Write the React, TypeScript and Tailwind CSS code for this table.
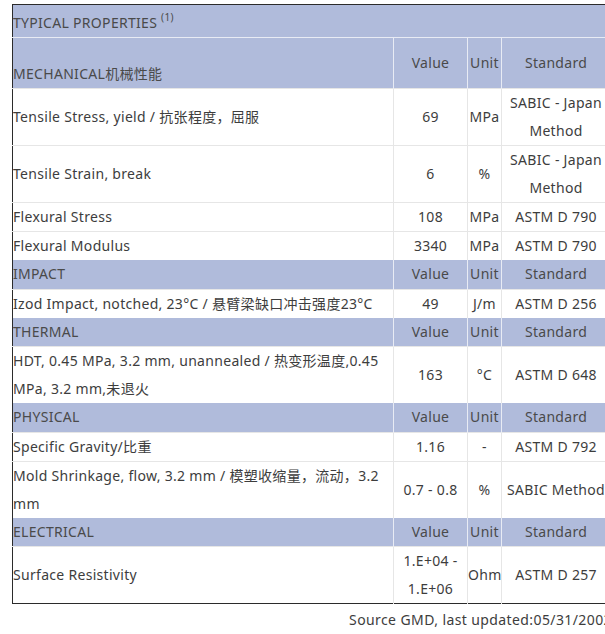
type Row = { label: string; value: string; unit: string; standard: string };
type Section = { title: string; rows: Row[] };

const sections: Section[] = [
  {
    title: 'MECHANICAL机械性能',
    rows: [
      { label: 'Tensile Stress, yield / 抗张程度，屈服', value: '69', unit: 'MPa', standard: 'SABIC - Japan Method' },
      { label: 'Tensile Strain, break', value: '6', unit: '%', standard: 'SABIC - Japan Method' },
      { label: 'Flexural Stress', value: '108', unit: 'MPa', standard: 'ASTM D 790' },
      { label: 'Flexural Modulus', value: '3340', unit: 'MPa', standard: 'ASTM D 790' },
    ],
  },
  {
    title: 'IMPACT',
    rows: [{ label: 'Izod Impact, notched, 23°C / 悬臂梁缺口冲击强度23°C', value: '49', unit: 'J/m', standard: 'ASTM D 256' }],
  },
  {
    title: 'THERMAL',
    rows: [
      {
        label: 'HDT, 0.45 MPa, 3.2 mm, unannealed / 热变形温度,0.45 MPa, 3.2 mm,未退火',
        value: '163',
        unit: '°C',
        standard: 'ASTM D 648',
      },
    ],
  },
  {
    title: 'PHYSICAL',
    rows: [
      { label: 'Specific Gravity/比重', value: '1.16', unit: '-', standard: 'ASTM D 792' },
      { label: 'Mold Shrinkage, flow, 3.2 mm / 模塑收缩量，流动，3.2 mm', value: '0.7 - 0.8', unit: '%', standard: 'SABIC Method' },
    ],
  },
  {
    title: 'ELECTRICAL',
    rows: [{ label: 'Surface Resistivity', value: '1.E+04 - 1.E+06', unit: 'Ohm', standard: 'ASTM D 257' }],
  },
];

const head = 'bg-[#b0bbdb] text-[#4a4a4a]';
const hcell = 'border-l border-[#e8ebf4] text-center align-middle p-0';
const cell = 'border-l border-t border-[#e6e6e6] text-center align-middle p-0';

function SectionRows({ s, first }: { s: Section; first: boolean }) {
  return (
    <>
      <tr className={`${head} ${first ? 'h-[51px] border-t border-[#e8ebf4]' : 'h-[29px]'}`}>
        <td className={`p-0 text-left ${first ? 'align-bottom' : 'align-middle'}`}>{s.title}</td>
        <td className={hcell}>Value</td>
        <td className={hcell}>Unit</td>
        <td className={hcell}>Standard</td>
      </tr>
      {s.rows.map((r) => (
        <tr key={r.label} className="text-[#3d3d3d]">
          <td className="border-t border-[#e6e6e6] p-0 text-left align-middle">{r.label}</td>
          <td className={cell}>{r.value}</td>
          <td className={cell}>{r.unit}</td>
          <td className={cell}>{r.standard}</td>
        </tr>
      ))}
    </>
  );
}

export default function App() {
  return (
    <div
      className="min-h-screen bg-white overflow-hidden text-[14px] leading-[28px] tracking-[0.3px]"
      style={{ fontFamily: '"Noto Sans", "Noto Sans CJK SC", sans-serif' }}
    >
      <div className="w-[600px] ml-[12px] pt-[4px]">
        <table className="w-[598px] border-collapse table-fixed border border-[#2b2b2b]">
          <colgroup>
            <col className="w-[381px]" />
            <col className="w-[74px]" />
            <col className="w-[34px]" />
            <col className="w-[109px]" />
          </colgroup>
          <tbody>
            <tr className={`${head} h-[33px]`}>
              <td colSpan={4} className="p-0 align-middle pt-[3px]">
                TYPICAL PROPERTIES <sup className="text-[10px] align-[2px]">(1)</sup>
              </td>
            </tr>
            {sections.map((s, i) => (
              <SectionRows key={s.title} s={s} first={i === 0} />
            ))}
          </tbody>
        </table>
        <p className="text-right text-[#3d3d3d] mt-[2px] leading-[28px] tracking-[0.4px] whitespace-nowrap">
          Source GMD, last updated:05/31/2002
        </p>
      </div>
    </div>
  );
}
